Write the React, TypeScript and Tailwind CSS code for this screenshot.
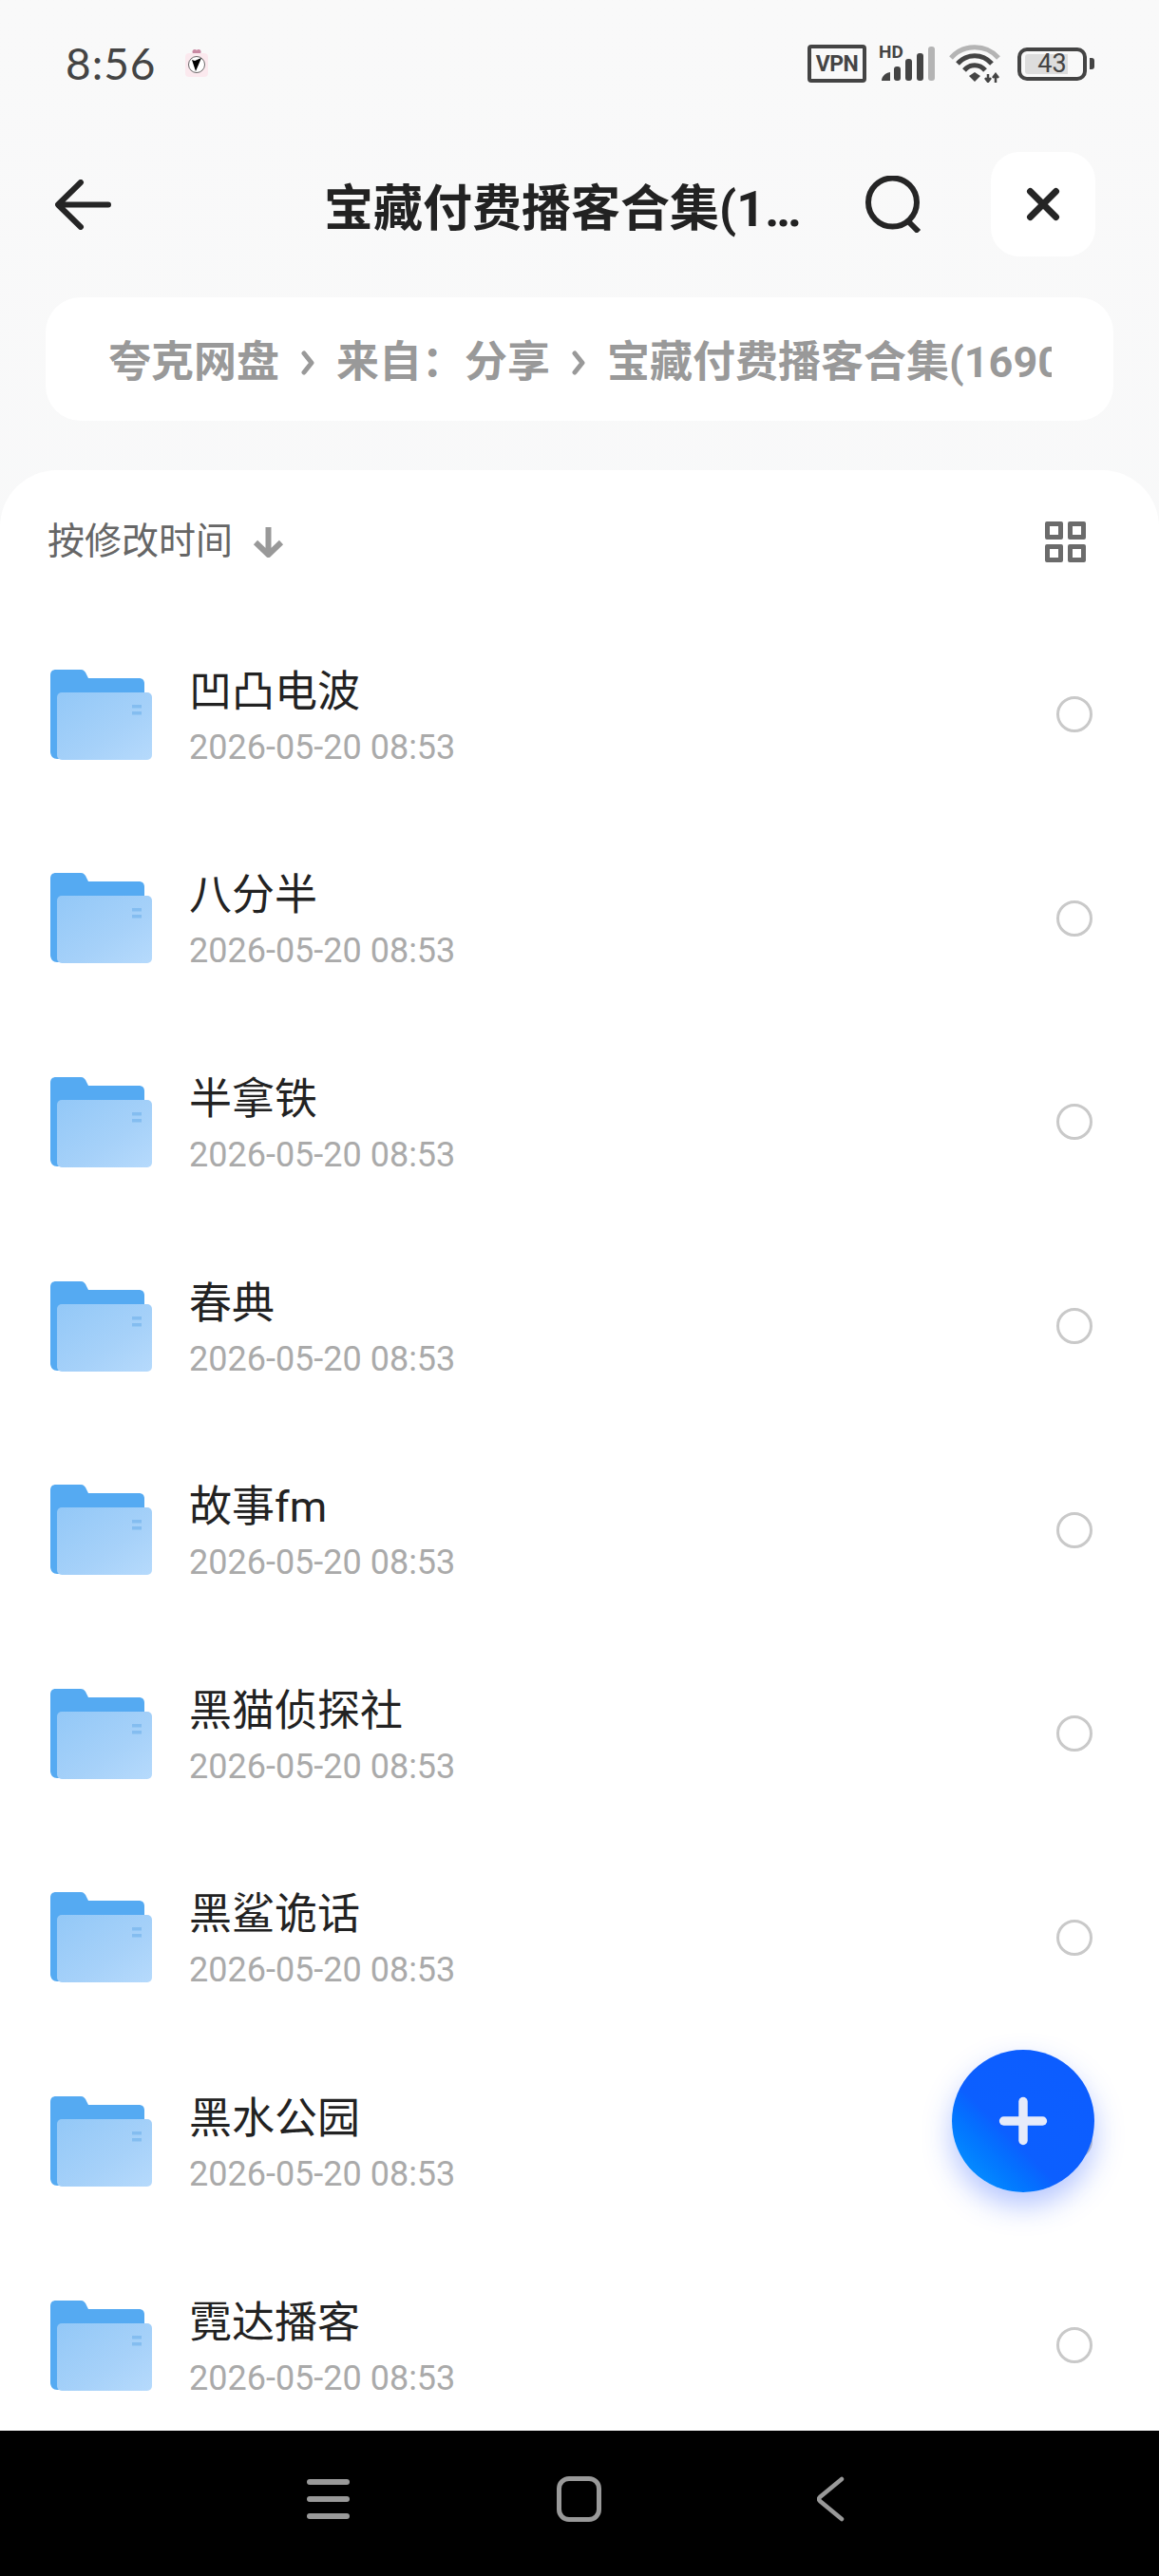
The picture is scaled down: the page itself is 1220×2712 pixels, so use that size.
import { Plus, X } from 'lucide-react'

const fontStack = "font-['Roboto','Noto_Sans_CJK_SC',sans-serif]"

const folders = ['凹凸电波', '八分半', '半拿铁', '春典', '故事fm', '黑猫侦探社', '黑鲨诡话', '黑水公园', '霓达播客']

function FolderIcon({ id }: { id: number }) {
    return (
        <svg width="108" height="95" viewBox="0 0 108 95" className="shrink-0">
            <defs>
                <linearGradient id={`folder-${id}`} x1="0" y1="0" x2="1" y2="1">
                    <stop offset="0" stopColor="#93c8f7" />
                    <stop offset="0.6" stopColor="#a6d1f9" />
                    <stop offset="1" stopColor="#b6dafc" />
                </linearGradient>
            </defs>
            <path d="M6 0H32C35 0 37 2 38 5L40 9H93C97 9 99 11 99 15V90H6C2 90 0 88 0 84V6C0 2 2 0 6 0Z" fill="#55aaf2" />
            <path d="M0 84V86C0 91 3 94 7 94H14V84Z" fill="#55aaf2" />
            <rect x="7" y="24" width="100" height="71" rx="5" fill={`url(#folder-${id})`} />
            <rect x="86" y="37" width="10" height="3.5" fill="#84bdf0" />
            <rect x="86" y="44" width="10" height="3.5" fill="#84bdf0" />
        </svg>
    )
}

function StatusIcons() {
    return (
        <div className="flex items-center">
            {/* vpn */}
            <div className="w-[62px] h-[40px] border-[4px] border-[#444] rounded-[4px] flex items-center justify-center text-[#444] text-[23px] tracking-[-0.5px] font-bold leading-none font-['Roboto',sans-serif]">
                VPN
            </div>
            {/* hd + signal */}
            <svg width="59" height="40" viewBox="0 0 59 40" className="ml-[13px] overflow-visible">
                <text x="0" y="14" fontSize="19" fontWeight="700" fill="#444" fontFamily="Roboto, sans-serif">HD</text>
                <path d="M3 38C3 34 6 30 12 29V38Z" fill="#444" />
                <rect x="16" y="23" width="7" height="15" rx="3" fill="#444" />
                <rect x="28" y="15" width="7" height="23" rx="3" fill="#444" />
                <rect x="40" y="9" width="7" height="29" rx="3" fill="#444" />
                <rect x="52" y="2" width="7" height="36" rx="3" fill="#b4b4b4" />
            </svg>
            {/* wifi */}
            <svg width="54" height="40" viewBox="0 0 54 40" className="ml-[15px]">
                <path d="M2 14C15 -1 39 -1 52 14" fill="none" stroke="#b4b4b4" strokeWidth="5" />
                <path d="M9 20C19 9 35 9 45 20" fill="none" stroke="#444" strokeWidth="5" />
                <path d="M16 27C22 20 32 20 38 27" fill="none" stroke="#444" strokeWidth="5" />
                <path d="M21 33L27 29L33 33L27 39Z" fill="#444" />
                <path d="M41 31V39M38 35L41 39L44 35" fill="none" stroke="#444" strokeWidth="2.5" />
                <path d="M49 40V31M46 35L49 31L52 35" fill="none" stroke="#444" strokeWidth="2.5" />
            </svg>
            {/* battery */}
            <div className="ml-[18px] w-[73px] h-[35px] border-[4px] border-[#444] rounded-[10px] relative flex items-center justify-center">
                <div className="absolute left-[4px] top-[3px] bottom-[3px] w-[45px] bg-[#ddd] rounded-l-[3px]" />
                <span className="relative text-[#444] text-[27px] leading-none font-['Roboto',sans-serif]">43</span>
            </div>
            <div className="ml-[3px] w-[5px] h-[12px] bg-[#444] rounded-r-[3px]" />
        </div>
    )
}

function Chevron() {
    return (
        <svg width="16" height="26" viewBox="0 0 16 26" className="shrink-0 mx-[22px]">
            <path d="M4 3L12 13L4 23" fill="none" stroke="#999" strokeWidth="5" strokeLinecap="round" strokeLinejoin="round" />
        </svg>
    )
}

function FolderRow({ name, id }: { name: string; id: number }) {
    return (
        <div className="h-[214.6px] shrink-0 flex items-center pl-[53px] pr-[70px]">
            <FolderIcon id={id} />
            <div className="ml-[38px] flex-1 flex flex-col">
                <div className="mt-[6px] text-[45px] leading-[58px] text-[#222]">{name}</div>
                <div className="mt-[5px] text-[36px] leading-[48px] text-[#aaa]">2026-05-20 08:53</div>
            </div>
            <div className="w-[38px] h-[38px] rounded-full border-[3px] border-[#c9c9c9]" />
        </div>
    )
}

export default function App() {
    return (
        <div className={`w-[1220px] h-[2712px] relative overflow-hidden flex flex-col bg-gradient-to-b from-[#f9f9f9] to-[#f5f7f9] ${fontStack}`}>
            {/* Status bar */}
            <div className="h-[134px] shrink-0 flex items-center justify-between pl-[69px] pr-[68px]">
                <div className="flex items-center">
                    <span className="text-[46px] tracking-[1px] leading-none text-[#444] font-['Lato','Roboto',sans-serif]">8:56</span>
                    <svg width="24" height="30" viewBox="0 0 24 30" className="ml-[30px]">
                        <circle cx="10" cy="2.5" r="2.5" fill="#c98aa3" />
                        <circle cx="14" cy="2.5" r="2.5" fill="#c98aa3" />
                        <rect x="0" y="4" width="24" height="25" rx="4" fill="#fbe9ee" />
                        <circle cx="12" cy="16" r="8.5" fill="#fff" stroke="#444" strokeWidth="0.8" />
                        <path d="M7 11L10 12L17 9L11 23Z" fill="#000" />
                    </svg>
                </div>
                <StatusIcons />
            </div>

            {/* Title bar */}
            <div className="h-[162px] shrink-0 flex items-center pl-[58px]">
                <svg width="59" height="53" viewBox="0 0 59 53" className="shrink-0">
                    <path d="M27 3L3 26.5L27 50M4 26.5H56" fill="none" stroke="#252525" strokeWidth="6" strokeLinecap="round" strokeLinejoin="round" />
                </svg>
                <div className="ml-[224px] mt-[12px] w-[505px] text-[52px] leading-[66px] font-bold text-[#222] truncate">宝藏付费播客合集(1690</div>
                <svg width="61" height="60" viewBox="0 0 61 60" className="ml-[64px] shrink-0">
                    <circle cx="29.5" cy="28" r="25.5" fill="none" stroke="#252525" strokeWidth="6" />
                    <path d="M45 47L57 59" stroke="#252525" strokeWidth="6" />
                </svg>
                <div className="ml-[72px] w-[110px] h-[110px] shrink-0 bg-white rounded-[30px] flex items-center justify-center">
                    <X size={54} strokeWidth={3.1} color="#252525" />
                </div>
            </div>

            {/* Breadcrumb */}
            <div className="mt-[17px] mx-[48px] h-[130px] shrink-0 rounded-[37px] bg-white pl-[66px] pr-[65px] flex items-center">
                <div className="mt-[7px] overflow-hidden whitespace-nowrap flex items-center text-[45px] leading-[60px] font-bold text-[#999]">
                    <span className="shrink-0">夸克网盘</span>
                    <Chevron />
                    <span className="shrink-0">来自：分享</span>
                    <Chevron />
                    <span className="shrink-0">宝藏付费播客合集(1690)</span>
                </div>
            </div>

            {/* File list */}
            <div className="mt-[52px] flex-1 min-h-0 bg-white rounded-t-[60px] overflow-hidden flex flex-col">
                <div className="h-[150px] shrink-0 flex items-center justify-between pl-[50px] pr-[77px]">
                    <div className="flex items-center">
                        <span className="text-[39px] leading-none text-[#666]">按修改时间</span>
                        <svg width="33" height="34" viewBox="0 0 33 34" className="ml-[21px]">
                            <path d="M16.5 2V31M3 18L16.5 31L30 18" fill="none" stroke="#999" strokeWidth="6" strokeLinejoin="round" />
                        </svg>
                    </div>
                    <div className="grid grid-cols-2 gap-[5px]">
                        <div className="w-[19px] h-[19px] border-[5px] border-[#6b6b6b] rounded-[2px]" />
                        <div className="w-[19px] h-[19px] border-[5px] border-[#6b6b6b] rounded-[2px]" />
                        <div className="w-[19px] h-[19px] border-[5px] border-[#6b6b6b] rounded-[2px]" />
                        <div className="w-[19px] h-[19px] border-[5px] border-[#6b6b6b] rounded-[2px]" />
                    </div>
                </div>
                {folders.map((name, i) => (
                    <FolderRow key={name} name={name} id={i} />
                ))}
            </div>

            {/* System nav */}
            <div className="h-[153px] shrink-0 bg-black flex items-start pt-[48px] pl-[323px]">
                <div className="w-[45px] mt-[3px] flex flex-col gap-[12px]">
                    <div className="h-[6px] rounded-full bg-[#999]" />
                    <div className="h-[6px] rounded-full bg-[#999]" />
                    <div className="h-[6px] rounded-full bg-[#999]" />
                </div>
                <div className="ml-[218px] w-[47px] h-[48px] border-[5px] border-[#999] rounded-[13px]" />
                <svg width="29" height="48" viewBox="0 0 29 48" className="ml-[227px]">
                    <path d="M26 3L3 22Q1 24 3 26L26 45" fill="none" stroke="#999" strokeWidth="4.5" strokeLinecap="round" />
                </svg>
            </div>

            {/* FAB */}
            <div className="absolute left-[1002px] top-[2158px] w-[150px] h-[150px] rounded-full bg-gradient-to-tr from-[#0a90ff] from-10% via-[#0c5fff] via-40% to-[#0c5cff] shadow-[0_14px_30px_rgba(40,90,255,0.35)] flex items-center justify-center">
                <Plus size={70} strokeWidth={3.25} color="#e6ebfa" />
            </div>
        </div>
    )
}
